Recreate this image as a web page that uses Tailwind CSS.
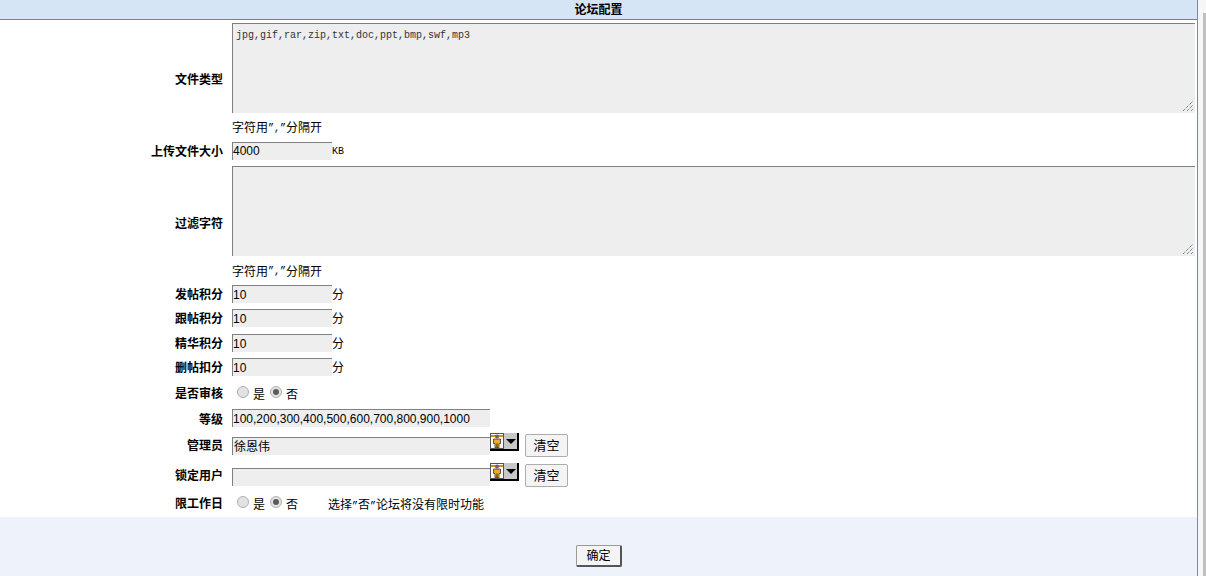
<!DOCTYPE html>
<html><head><meta charset="utf-8"><script src="https://cdn.jsdelivr.net/npm/@tailwindcss/browser@4"></script></head>
<body class="bg-white">
<div class="flex h-[576px] w-[1206px] overflow-hidden font-['Liberation_Sans','Noto_Sans_CJK_SC',sans-serif] text-[12px] text-black">
<div class="flex w-[1198px] shrink-0 flex-col border-r border-[#808a96]">
<div class="flex h-[20px] shrink-0 items-center justify-center border-b border-[#808080] bg-[#d5e5f6] font-bold">论坛配置</div>
<div class="flex flex-1 flex-col pt-[3px]">
  <div class="flex items-center"><b class="w-[223px] pb-[5px] text-right">文件类型</b><div class="ml-[9px] flex flex-col">
    <div class="relative h-[90px] w-[963px] border-t border-l border-[#808080] bg-[#eeeeee] px-[3px] py-[4px] font-['Liberation_Mono',monospace] text-[10px] text-[#333]">jpg,gif,rar,zip,txt,doc,ppt,bmp,swf,mp3<svg class="absolute right-[2px] bottom-[2px]" width="10" height="10" viewBox="0 0 10 10" fill="none" stroke="#555" stroke-dasharray="1 1"><path d="M0 10 10 0M4 10l6-6M8 10l2-2"/></svg></div>
    <div class="flex h-[29px] items-center pt-px">字符用<span class="font-['Liberation_Mono',monospace] text-[10px]">”,”</span>分隔开</div></div></div>
  <div class="flex h-[18px] items-center"><b class="w-[223px] pt-[2px] text-right">上传文件大小</b><div class="ml-[9px] flex h-full w-[100px] items-center border-t border-l border-[#808080] bg-[#eeeeee] pb-[2px]">4000</div><span class="font-['Liberation_Mono',monospace] text-[10px]">KB</span></div>
  <div class="mt-[6px] flex items-center"><b class="w-[223px] pb-[3px] text-right">过滤字符</b><div class="ml-[9px] flex flex-col">
    <div class="relative h-[90px] w-[963px] border-t border-l border-[#808080] bg-[#eeeeee]"><svg class="absolute right-[2px] bottom-[2px]" width="10" height="10" viewBox="0 0 10 10" fill="none" stroke="#555" stroke-dasharray="1 1"><path d="M0 10 10 0M4 10l6-6M8 10l2-2"/></svg></div>
    <div class="flex h-[29px] items-center pt-[2px]">字符用<span class="font-['Liberation_Mono',monospace] text-[10px]">”,”</span>分隔开</div></div></div>
  <div class="flex h-[18px] items-center"><b class="w-[223px] pt-[2px] text-right">发帖积分</b><div class="ml-[9px] flex h-full w-[100px] items-center border-t border-l border-[#808080] bg-[#eeeeee]">10</div><span class="pt-[2px]">分</span></div>
  <div class="mt-[6px] flex h-[18px] items-center"><b class="w-[223px] pt-[2px] text-right">跟帖积分</b><div class="ml-[9px] flex h-full w-[100px] items-center border-t border-l border-[#808080] bg-[#eeeeee]">10</div><span class="pt-[2px]">分</span></div>
  <div class="mt-[7px] flex h-[18px] items-center"><b class="w-[223px] pt-[2px] text-right">精华积分</b><div class="ml-[9px] flex h-full w-[100px] items-center border-t border-l border-[#808080] bg-[#eeeeee]">10</div><span class="pt-[2px]">分</span></div>
  <div class="mt-[6px] flex h-[18px] items-center"><b class="w-[223px] pt-[2px] text-right">删帖扣分</b><div class="ml-[9px] flex h-full w-[100px] items-center border-t border-l border-[#808080] bg-[#eeeeee]">10</div><span class="pt-[2px]">分</span></div>
  <div class="mt-[6px] flex h-[27px] items-center"><b class="w-[223px] pb-[4px] text-right">是否审核</b><div class="ml-[14px] flex items-center gap-[4px]"><span class="mb-[8px] size-[12px] rounded-full border border-[#b0b0b0] bg-[#e2e2e2]"></span><span class="pb-[2px]">是</span><span class="mb-[8px] ml-[1px] flex size-[12px] items-center justify-center rounded-full border border-[#b0b0b0] bg-[#e2e2e2]"><span class="size-[6px] rounded-full bg-[#5a5a5a]"></span></span><span class="pb-[2px]">否</span></div></div>
  <div class="flex h-[18px] items-center"><b class="w-[223px] pt-[4px] text-right">等级</b><div class="ml-[9px] flex h-full w-[258px] items-center border-t border-l border-[#808080] bg-[#eeeeee]">100,200,300,400,500,600,700,800,900,1000</div></div>
  <div class="mt-[6px] flex h-[24px] items-center"><b class="w-[223px] pt-[2px] text-right">管理员</b><div class="mb-[2px] ml-[9px] flex h-[18px] w-[258px] items-center self-end border-t border-l border-[#808080] bg-[#eeeeee] pl-px">徐恩伟</div>
    <div class="flex h-[18px] w-[29px] self-start border-r-2 border-b-2 border-black"><span class="flex w-[14px] items-center justify-center border border-[#555] bg-white"><svg width="12" height="14" viewBox="0 0 12 14"><path d="M0 2h12" stroke="#d98a1c" stroke-width="2"/><circle cx="6" cy="2.500" r="2" fill="#666"/><path d="M2.500 5h7v4.500H8V14H4V9.500H2.500z" fill="#f5a623" stroke="#222" stroke-width=".7"/><path d="M6 9.500V14" stroke="#222"/></svg></span><span class="flex flex-1 items-center justify-center bg-[#c8c8c8]"><span class="h-0 w-0 border-x-[5px] border-t-[5px] border-x-transparent border-t-black"></span></span></div>
    <button class="ml-[6px] h-[23px] w-[43px] self-end rounded-[2px] border border-[#adadad] bg-[#f4f4f4] text-[13px]">清空</button></div>
  <div class="mt-[6px] flex h-[24px] items-center"><b class="w-[223px] pt-[2px] text-right">锁定用户</b><div class="mb-[1px] ml-[9px] h-[18px] w-[258px] self-end border-t border-l border-[#808080] bg-[#eeeeee]"></div>
    <div class="flex h-[18px] w-[29px] self-start border-r-2 border-b-2 border-black"><span class="flex w-[14px] items-center justify-center border border-[#555] bg-white"><svg width="12" height="14" viewBox="0 0 12 14"><path d="M0 2h12" stroke="#d98a1c" stroke-width="2"/><circle cx="6" cy="2.500" r="2" fill="#666"/><path d="M2.500 5h7v4.500H8V14H4V9.500H2.500z" fill="#f5a623" stroke="#222" stroke-width=".7"/><path d="M6 9.500V14" stroke="#222"/></svg></span><span class="flex flex-1 items-center justify-center bg-[#c8c8c8]"><span class="h-0 w-0 border-x-[5px] border-t-[5px] border-x-transparent border-t-black"></span></span></div>
    <button class="ml-[6px] h-[23px] w-[43px] self-end rounded-[2px] border border-[#adadad] bg-[#f4f4f4] text-[13px]">清空</button></div>
  <div class="flex h-[30px] items-center"><b class="w-[223px] pt-[4px] text-right">限工作日</b><div class="ml-[14px] flex items-center gap-[4px]"><span class="size-[12px] rounded-full border border-[#b0b0b0] bg-[#e2e2e2]"></span><span class="pt-[6px]">是</span><span class="ml-[1px] flex size-[12px] items-center justify-center rounded-full border border-[#b0b0b0] bg-[#e2e2e2]"><span class="size-[6px] rounded-full bg-[#5a5a5a]"></span></span><span class="pt-[6px]">否</span><span class="ml-[26px] pt-[6px]">选择<span class="font-['Liberation_Mono',monospace] text-[10px]">”</span>否<span class="font-['Liberation_Mono',monospace] text-[10px]">”</span>论坛将没有限时功能</span></div></div>
</div>
<div class="flex h-[59px] shrink-0 items-start justify-center bg-[#eef2fa] pt-[28px]"><button class="h-[22px] w-[46px] rounded-[2px] border border-r-2 border-b-2 border-[#9a9a9a] border-r-[#555] border-b-[#555] bg-[#f4f4f4] pl-px">确定</button></div>
</div>
<div class="flex flex-1 justify-end bg-[#f6f6f6]"><div class="mt-[13px] h-full w-[3px] bg-[#c0c0c0]"></div></div>
</div>
</body></html>
